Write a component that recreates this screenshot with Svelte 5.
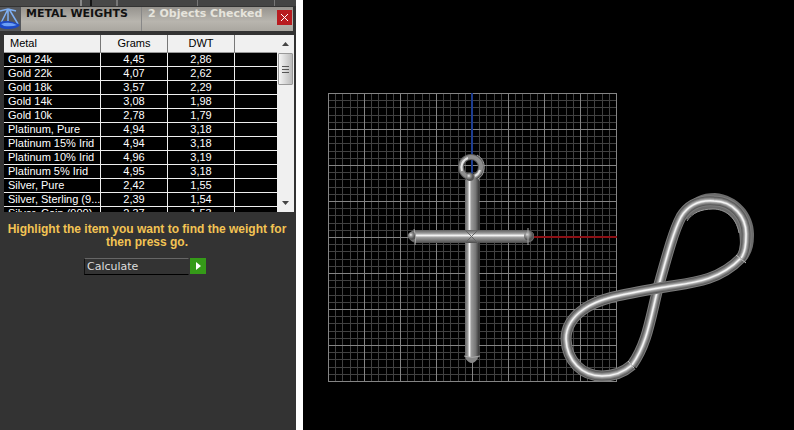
<script lang="ts">
	interface Metal {
		name: string;
		grams: string;
		dwt: string;
	}

	const metals: Metal[] = [
		{ name: 'Gold 24k', grams: '4,45', dwt: '2,86' },
		{ name: 'Gold 22k', grams: '4,07', dwt: '2,62' },
		{ name: 'Gold 18k', grams: '3,57', dwt: '2,29' },
		{ name: 'Gold 14k', grams: '3,08', dwt: '1,98' },
		{ name: 'Gold 10k', grams: '2,78', dwt: '1,79' },
		{ name: 'Platinum, Pure', grams: '4,94', dwt: '3,18' },
		{ name: 'Platinum 15% Irid', grams: '4,94', dwt: '3,18' },
		{ name: 'Platinum 10% Irid', grams: '4,96', dwt: '3,19' },
		{ name: 'Platinum 5% Irid', grams: '4,95', dwt: '3,18' },
		{ name: 'Silver, Pure', grams: '2,42', dwt: '1,55' },
		{ name: 'Silver, Sterling (9...', grams: '2,39', dwt: '1,54' },
		{ name: 'Silver, Coin (900)', grams: '2,37', dwt: '1,53' }
	];

	// the grid is 8 major cells of 36 units, each split in 5
	const gridSteps = Array.from({ length: 41 }, (_, i) => i);
	const minor = gridSteps.filter((i) => i % 5 !== 0).map((i) => Math.round(i * 7.2));
	const major = gridSteps.filter((i) => i % 5 === 0).map((i) => Math.round(i * 7.2));

	const toPath = (steps: number[]) =>
		steps.map((s) => `M${328.5 + s} 93V381M328 ${93.5 + s}H617`).join('');

	// the bail is one wire, the front strand passes over the back one
	const strands = [
		'M632 365C647 344 650 320 658 288C668 252 674 230 681 217C689 204 701 200 714 201C733 201 747 217 746 236C746 246 745 253 741 258',
		'M741 258C716 284 684 283 659 288C620 295 600 298 584 309C571 318 566 329 566 339C567 361 582 376 602 376C614 376 624 372 632 365'
	];

	const shades = [
		{ colour: '#7c7c7c', width: 11 },
		{ colour: '#5a5a5a', width: 9 },
		{ colour: '#757575', width: 7 },
		{ colour: '#969696', width: 5 },
		{ colour: '#bcbcbc', width: 3 },
		{ colour: '#f4f4f4', width: 1.5 }
	];

	let action = $state('Calculate');
</script>

<main>
	<section class="panel">
		<div class="strip"></div>
		<header>
			<svg class="logo" viewBox="0 0 21 24" aria-hidden="true">
				<path d="M0 0H21V24H0Z" fill="#55575b" />
				<path d="M0 4L8 2L16 4M8 2L1 16M9 2L18 17M8 2V14" fill="none" stroke="#7fb0f4" stroke-width="1.500" />
				<path d="M0 15Q9 12 20 18Q17 22 8 22Q2 22 0 20Z" fill="#1c48c4" />
				<path d="M1 17Q9 14 17 18Q12 20 4 19Z" fill="#6c9ff5" />
			</svg>
			<h1>METAL WEIGHTS</h1>
			<p class="count">2 Objects Checked</p>
			<button class="close" aria-label="Close">
				<svg viewBox="0 0 15 15"><path d="M4 4L11 11M11 4L4 11" /></svg>
			</button>
		</header>

		<div class="list">
			<div class="rows">
				<table>
					<thead>
						<tr>
							<th class="name">Metal</th>
							<th class="value">Grams</th>
							<th class="value">DWT</th>
							<th aria-label="Empty"></th>
						</tr>
					</thead>
					<tbody>
						{#each metals as metal}
							<tr>
								<td class="name">{metal.name}</td>
								<td>{metal.grams}</td>
								<td>{metal.dwt}</td>
								<td></td>
							</tr>
						{/each}
					</tbody>
				</table>
			</div>
			<div class="scrollbar">
				<button class="arrow" aria-label="Scroll up">
					<svg viewBox="0 0 7 4"><path d="M0 4L3.500 0L7 4Z" /></svg>
				</button>
				<div class="thumb"><i></i><i></i><i></i></div>
				<button class="arrow down" aria-label="Scroll down">
					<svg viewBox="0 0 7 4"><path d="M0 0H7L3.500 4Z" /></svg>
				</button>
			</div>
		</div>

		<p class="hint">Highlight the item you want to find the weight for then press go.</p>
		<div class="action">
			<input type="text" aria-label="Action" bind:value={action} />
			<button class="go" aria-label="Go">
				<svg viewBox="0 0 16 16"><path d="M6 4L11 8L6 12Z" /></svg>
			</button>
		</div>
	</section>

	<section class="viewer">
		<svg viewBox="303 0 491 430" role="img" aria-label="Cross pendant and bail">
			<defs>
				<linearGradient id="barV">
					<stop offset="0" stop-color="#666" />
					<stop offset=".2" stop-color="#999" />
					<stop offset=".32" stop-color="#f4f4f4" />
					<stop offset=".45" stop-color="#999" />
					<stop offset=".75" stop-color="#777" />
					<stop offset="1" stop-color="#383838" />
				</linearGradient>
				<linearGradient id="barH" x2="0" y2="1">
					<stop offset="0" stop-color="#606060" />
					<stop offset=".25" stop-color="#999" />
					<stop offset=".42" stop-color="#f4f4f4" />
					<stop offset=".57" stop-color="#a0a0a0" />
					<stop offset="1" stop-color="#4c4c4c" />
				</linearGradient>
				<radialGradient id="ball" cx=".35" cy=".35">
					<stop offset="0" stop-color="#f2f2f2" />
					<stop offset=".4" stop-color="#999" />
					<stop offset="1" stop-color="#555" />
				</radialGradient>
			</defs>

			<path d={toPath(minor)} class="minor" />
			<path d={toPath(major)} class="major" />
			<path d="M472 93V175" stroke="#1c3c90" stroke-width="2" />
			<path d="M530 237H617" stroke="#8c1015" stroke-width="2" />

			<g fill="none">
				<circle cx="471" cy="167" r="10" stroke="#5c5c5c" stroke-width="6" />
				<circle cx="471" cy="167" r="10" stroke="#8d8d8d" stroke-width="4" />
				<path d="M462 171A10 10 0 0 1 468 158M475 176A10 10 0 0 0 480 170" stroke="#e4e4e4" stroke-width="2" />
				<path d="M477 155A14 14 0 0 1 476 180H480" stroke="#a8a8a8" />
			</g>
			<path d="M465 180Q472 174 479 180V357Q476 362 471 362Q466 361 465 357Z" fill="url(#barV)" />
			<path d="M415 230H527Q534 231 534 236Q534 242 527 243H415Q409 241 409 236Q409 231 415 230Z" fill="url(#barH)" />
			<circle cx="470" cy="177" r="4" fill="url(#ball)" />
			<circle cx="412" cy="236" r="4" fill="url(#ball)" />
			<circle cx="529" cy="236" r="5" fill="url(#ball)" />
			<path d="M466 357H478Q476 363 471 363Q467 362 466 357Z" fill="#858585" />
			<g fill="none" stroke="#aaa">
				<path d="M414 229Q417 237 415 245M528 228V245M464 356Q471 359 480 356" />
				<path d="M465 230L478 243M478 230L465 243" stroke="#626262" />
			</g>

			<!-- thicker bend of the wire -->
			<path
				d="M682 211C691 197 702 193 715 193C739 195 755 215 754 236C754 247 751 255 745 262L737 256C741 248 740 239 739 233C736 216 724 209 713 209C701 209 692 213 687 220Z"
				fill="#6c6c6c"
			/>
			{#each strands as strand}
				<g class="wire">
					{#each shades as shade}
						<path d={strand} stroke={shade.colour} stroke-width={shade.width} />
					{/each}
				</g>
			{/each}
			<path d="M736 255L746 263M628 361L634 368" stroke="#c0c0c0" />
			<path
				d="M739 233C736 216 724 209 713 209C701 209 692 213 687 221"
				fill="none"
				stroke="#999"
			/>
		</svg>
	</section>
</main>

<style>
	:global(body) {
		margin: 0;
		background: #fff;
	}

	main {
		display: flex;
		gap: 7px;
		min-height: 100vh;
		font-family: 'Liberation Sans', Arial, sans-serif;
		font-size: 11px;
	}

	button {
		padding: 0;
		border: 0;
		display: flex;
		align-items: center;
		justify-content: center;
	}

	.panel {
		flex: 0 0 296px;
		background: #333;
	}

	.strip {
		height: 6px;
		background: linear-gradient(90deg, #484848 80px, #888 80px 82px, #484848 82px 90px, #151515 90px 92px, #484848 92px 116px, #777 116px 118px, #444 118px 197px, #777 197px 198px, #444 198px 274px, #777 274px 275px, #444 275px);
		border-bottom: 1px solid #333;
	}

	header {
		display: flex;
		height: 24px;
		margin-right: 3px;
		background: linear-gradient(#96938e, #b8b5ae 60%, #aaa7a0);
		font-family: 'DejaVu Sans', Verdana, sans-serif;

		.logo {
			width: 21px;
			height: 24px;
		}

		h1,
		.count {
			margin: 0;
			font-size: 11px;
			font-weight: bold;
			line-height: 13px;
		}

		h1 {
			padding-left: 5px;
			width: 115px;
			border-right: 1px solid #888;
			color: #111;
			white-space: nowrap;
		}

		.count {
			flex: 1;
			padding-left: 6px;
			color: #e6e4dc;
		}

		.close {
			width: 15px;
			height: 15px;
			margin: 3px 1px 0 0;
			background: #b81c20;

			svg {
				width: 15px;
				height: 15px;
				stroke: #fff;
			}
		}
	}

	.list {
		display: flex;
		height: 177px;
		margin: 4px 2px 0 4px;
		background: #000;
		overflow: hidden;
	}

	.rows {
		flex: 1;
		overflow: hidden;
	}

	table {
		width: 100%;
		table-layout: fixed;
		border-collapse: separate;
		border-spacing: 0;
		color: #fff;
	}

	th,
	td {
		box-sizing: border-box;
		height: 14px;
		padding: 0;
		border-right: 1px solid #eee;
		border-bottom: 1px solid #eee;
		font-weight: normal;
		line-height: 13px;
		text-align: center;
		white-space: nowrap;

		&:last-child {
			border-right: 0;
		}
	}

	th {
		height: 18px;
		background: #f0f0f0;
		border-right-color: #777;
		border-bottom-color: #999;
		color: #000;
	}

	.value {
		width: 67px;
	}

	.name {
		width: 97px;
		padding-left: 4px;
		text-align: left;
	}

	th.name {
		padding-left: 6px;
	}

	.scrollbar {
		display: flex;
		flex-direction: column;
		width: 17px;
		background: #f0f0f0;

		.arrow {
			height: 18px;
			background: none;
		}

		.down {
			margin-top: auto;
		}

		svg {
			width: 7px;
			height: 4px;
			fill: #444;
		}

		.thumb {
			display: flex;
			flex-direction: column;
			align-items: center;
			justify-content: center;
			gap: 2px;
			height: 30px;
			margin: 0 1px;
			border: 1px solid #999;
			border-radius: 1px;
			background: linear-gradient(90deg, #f5f5f5, #d8d8d8 50%, #bbb);

			i {
				width: 7px;
				height: 1px;
				background: #555;
			}
		}
	}

	.hint {
		margin: 11px 6px 0 4px;
		color: #f3c454;
		font-size: 12px;
		font-weight: bold;
		line-height: 13px;
		text-align: center;
	}

	.action {
		display: flex;
		margin: 9px 0 0 84px;

		input {
			box-sizing: border-box;
			width: 105px;
			height: 17px;
			padding: 0 2px;
			border: 1px solid;
			border-color: #666 #333 #000 #111;
			background: #333;
			color: #ddd;
			font-family: 'DejaVu Sans', Verdana, sans-serif;
			font-size: 11px;
		}

		.go {
			width: 16px;
			height: 16px;
			margin-left: 1px;
			background: #359a18;

			svg {
				width: 16px;
				height: 16px;
				fill: #fff;
			}
		}
	}

	.viewer {
		flex: 1;
		min-width: 0;
		background: #000;

		svg {
			display: block;
			width: 100%;
		}
	}

	.minor {
		stroke: #414141;
		fill: none;
	}

	.major {
		stroke: #848484;
		fill: none;
	}

	.wire path {
		fill: none;
	}
</style>
